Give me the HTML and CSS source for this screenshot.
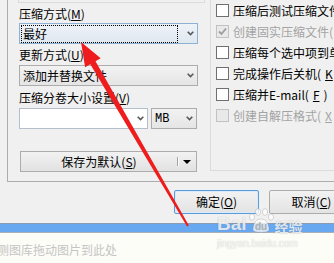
FILE: index.html
```html
<!DOCTYPE html>
<html lang="zh-CN">
<head>
  <meta charset="UTF-8">
  <meta name="viewport" content="width=device-width, initial-scale=1.0">
  <title>压缩文件名和参数</title>
  <link rel="stylesheet" href="styles.css">
</head>
<body>
  <div class="dialog">
    <div class="tabpage">
      <div class="left">
        <div class="format-group"></div>

        <label class="field-label first">压缩方式(<u>M</u>)</label>
        <div class="combo focused">
          <span class="focus-rect">最好</span>
          <svg class="chevron" width="7" height="5" viewBox="0 0 7 5"><path d="M0.7 0.7 L3.5 3.6 L6.3 0.7" /></svg>
        </div>

        <label class="field-label">更新方式(<u>U</u>)</label>
        <div class="combo combo-update">
          <span class="combo-text">添加并替换文件</span>
          <svg class="chevron" width="7" height="5" viewBox="0 0 7 5"><path d="M0.7 0.7 L3.5 3.6 L6.3 0.7" /></svg>
        </div>

        <label class="field-label label-volume">压缩分卷大小设置(<u>V</u>)</label>
        <div class="volume-row">
          <div class="combo edit">
            <svg class="chevron" width="7" height="5" viewBox="0 0 7 5"><path d="M0.7 0.7 L3.5 3.6 L6.3 0.7" /></svg>
          </div>
          <div class="combo unit">
            <span class="combo-text mono">MB</span>
            <svg class="chevron" width="7" height="5" viewBox="0 0 7 5"><path d="M0.7 0.7 L3.5 3.6 L6.3 0.7" /></svg>
          </div>
        </div>

        <div class="split-button">
          <span class="split-label">保存为默认(<u>S</u>)</span>
          <i class="split-sep"></i>
          <svg class="split-arrow" width="8" height="4" viewBox="0 0 8 4"><path d="M0 0 H8 L4 4 Z" /></svg>
        </div>
      </div>

      <div class="options">
        <div class="check-row"><span class="box"></span>压缩后测试压缩文件(<u>T</u>)</div>
        <div class="check-row disabled">
          <span class="box"><svg width="11" height="11" viewBox="0 0 11 11"><path d="M2 5.5 L4.5 8 L9 2.5" /></svg></span>创建固实压缩文件(<u>S</u>)
        </div>
        <div class="check-row"><span class="box"></span>压缩每个选中项到单独的压缩文件(<u>A</u>)</div>
        <div class="check-row"><span class="box"></span>完成操作后关机(<u>K</u>)</div>
        <div class="check-row"><span class="box"></span>压缩并E-mail(<u>F</u>)</div>
        <div class="check-row disabled"><span class="box"></span>创建自解压格式(<u>X</u>)</div>
      </div>
    </div>

    <div class="buttons">
      <button class="btn default">确定(<u>O</u>)</button>
      <button class="btn">取消(<u>C</u>)</button>
    </div>
  </div>

  <div class="frame-edge"></div>
  <div class="gallery">侧图库拖动图片到此处</div>

  <div class="watermark">
    <div class="wm-logo">
      <span class="wm-bai">Bai</span>
      <svg class="wm-paw" width="28" height="26" viewBox="0 0 28 26">
        <ellipse cx="5" cy="9" rx="2.6" ry="3.2" />
        <ellipse cx="11" cy="4" rx="2.6" ry="3.4" />
        <ellipse cx="18" cy="4" rx="2.6" ry="3.4" />
        <ellipse cx="24" cy="9" rx="2.6" ry="3.2" />
        <path d="M6 22 C6 14 10 11 14 11 C18 11 22 14 22 22 C22 25 6 25 6 22 Z" />
        <text x="8" y="22">du</text>
      </svg>
      <span class="wm-cn">经验</span>
    </div>
    <div class="wm-url">jingyan.baidu.com</div>
  </div>

  <svg class="annotation" width="334" height="263" viewBox="0 0 334 263">
    <polygon points="81,42 100.7,58.3 95.5,61.3 188.9,225.5 187.1,226.5 90.3,64.3 85.1,67.3" />
  </svg>
</body>
</html>
```

FILE: styles.css
```css
body {
  margin: 0;
  width: 334px;
  height: 263px;
  overflow: hidden;
  position: relative;
  background-color: #fdfdf7;
  font-family: "Noto Sans CJK SC", "Liberation Sans", sans-serif;
  font-size: 12px;
  line-height: 14px;
  color: #000;
}

u {
  text-decoration: underline;
}

.mono {
  font-family: "Liberation Mono", "Noto Sans CJK SC", monospace;
}

.dialog {
  height: 223px;
  background-color: #f0f0f0;
  overflow: hidden;
}

.tabpage {
  display: flex;
  height: 181px;
  margin-left: 7px;
  border-left: 1px solid #acacac;
  border-bottom: 1px solid #acacac;
}

.left {
  width: 202px;
  flex: none;
}

.format-group {
  width: 185px;
  height: 2px;
  margin-left: 10px;
  border: 1px solid #dcdcdc;
  border-top: none;
}

.field-label {
  display: block;
  margin: 4px 0 0 11px;
  white-space: nowrap;
}

.field-label.label-volume {
  margin-top: 5px;
}

.combo {
  display: flex;
  align-items: center;
  box-sizing: border-box;
  width: 179px;
  height: 21px;
  margin: 2px 0 0 11px;
  border: 1px solid #acacac;
  background: linear-gradient(#f2f2f2, #e5e5e5);
}

.combo.combo-update {
  margin-top: 3px;
}

.combo.focused {
  border-color: #8fb1d3;
  background: linear-gradient(#eef3f8, #dfe7ef);
}

.focus-rect {
  box-sizing: border-box;
  width: 157px;
  height: 18px;
  margin-left: 1px;
  padding-left: 1px;
  border: 1px dotted #000;
  line-height: 16px;
}

.combo-text {
  padding-left: 3px;
  white-space: nowrap;
}

.chevron {
  margin-left: auto;
  margin-right: 3px;
}

.chevron path {
  fill: none;
  stroke: #575757;
  stroke-width: 1.6;
}

.volume-row {
  display: flex;
  gap: 3px;
  margin: 3px 0 0 11px;
}

.volume-row .combo {
  margin: 0;
}

.combo.edit {
  width: 129px;
  background: #fff;
  border-color: #b3bfcc;
}

.combo.unit {
  width: 46px;
}

.split-button {
  display: flex;
  align-items: center;
  box-sizing: border-box;
  width: 177px;
  height: 21px;
  margin: 22px 0 0 12px;
  border: 1px solid #acacac;
  background: linear-gradient(#f2f2f2, #e2e2e2);
}

.split-label {
  flex: 1;
  text-align: center;
  white-space: nowrap;
}

.split-sep {
  width: 1px;
  height: 9px;
  background-color: #a2a2a2;
  box-shadow: 1px 0 #fff;
}

.split-arrow {
  margin: 0 5px 0 5px;
}

.options {
  flex: 1;
  height: 170px;
  padding-left: 5px;
  border-left: 1px solid #dcdcdc;
  border-bottom: 1px solid #dcdcdc;
  white-space: nowrap;
}

.check-row {
  display: flex;
  align-items: center;
  gap: 4px;
  height: 21px;
}

.box {
  display: flex;
  align-items: center;
  justify-content: center;
  flex: none;
  box-sizing: border-box;
  width: 13px;
  height: 13px;
  border: 1px solid #707070;
  background: #fff;
}

.box path {
  fill: none;
  stroke: #9c9c9c;
  stroke-width: 1.8;
}

.check-row.disabled {
  color: #a3a3a3;
}

.check-row.disabled .box {
  border-color: #c2c2c2;
  background: #e9e9e9;
}

.buttons {
  display: flex;
  gap: 10px;
  margin: 8px 0 0 174px;
}

.btn {
  flex: none;
  width: 85px;
  height: 24px;
  padding: 0;
  border: 1px solid #acacac;
  border-radius: 2px;
  background: linear-gradient(#f2f2f2, #e3e3e3);
  font: inherit;
  color: #000;
}

.btn.default {
  border-color: #5a9bd8;
  box-shadow: inset 0 0 0 1px #d6ebfb;
}

.frame-edge {
  height: 8px;
  background-color: #67a8f1;
  border-top: 1px solid #8c9cb0;
  border-bottom: 1px solid #aab0b8;
}

.gallery {
  margin: 10px 0 0 -3px;
  color: #c4c4c4;
  white-space: nowrap;
}

/* baidu watermark and the red arrow lie over the screenshot */
.watermark {
  position: absolute;
  left: 217px;
  top: 207px;
  width: 90px;
  color: rgba(255, 255, 255, 0.8);
  text-shadow: 0 0 1px rgba(90, 90, 90, 0.45);
}

.wm-logo {
  display: flex;
  align-items: flex-end;
  height: 27px;
}

.wm-bai {
  font-family: "Liberation Sans", sans-serif;
  font-weight: bold;
  font-size: 19px;
  line-height: 20px;
}

.wm-paw ellipse,
.wm-paw path {
  fill: rgba(255, 255, 255, 0.75);
  stroke: rgba(120, 120, 120, 0.35);
  stroke-width: 0.8;
}

.wm-paw text {
  font-family: "Liberation Sans", sans-serif;
  font-weight: bold;
  font-size: 10px;
  fill: rgba(170, 170, 170, 0.7);
}

.wm-cn {
  font-size: 14px;
  line-height: 16px;
  font-weight: bold;
}

.wm-url {
  margin-top: 4px;
  font-family: "Liberation Sans", sans-serif;
  font-size: 10px;
  line-height: 12px;
  color: rgba(255, 255, 255, 0.85);
  text-shadow: 0 0 1px rgba(120, 120, 120, 0.5);
}

.annotation {
  position: absolute;
  left: 0;
  top: 0;
  pointer-events: none;
}

.annotation polygon {
  fill: #ee1c1c;
}
```
